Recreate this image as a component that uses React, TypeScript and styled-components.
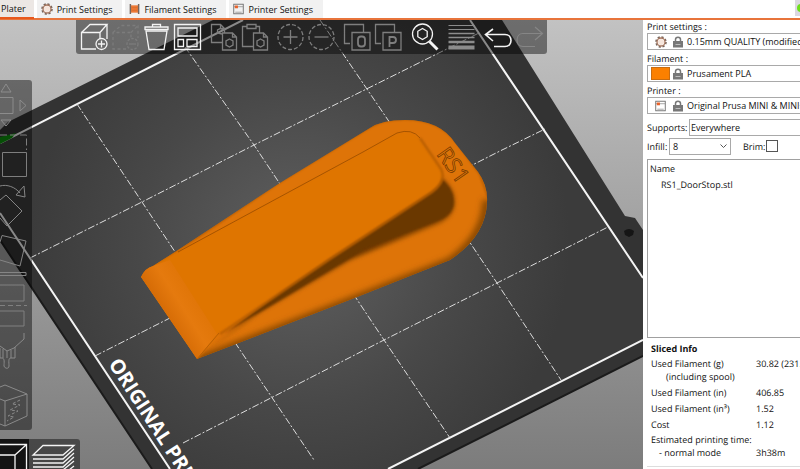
import React from "react";
import styled, { createGlobalStyle, css } from "styled-components";

const GlobalStyle = createGlobalStyle`
  html, body, #root { height: 100%; margin: 0; }
  body { overflow: hidden; background: #fff; text-rendering: geometricPrecision; }
  *, *::before, *::after { box-sizing: border-box; }
  body, button, select, input, table {
    font-family: "Open Sans", "Noto Sans", sans-serif;
    font-size: 9px;
    color: #111;
  }
`;

const Window = styled.div`
  display: flex;
  flex-direction: column;
  height: 100vh;
  overflow: hidden;
`;

const TabBar = styled.nav`
  display: flex;
  gap: 3px;
  height: 20px;
  flex: none;
  background: #fff;
  border-bottom: 2px solid #e8743b;
`;

const Tab = styled.button<{ $active?: boolean }>`
  display: flex;
  align-items: center;
  gap: 4px;
  height: ${(p) => (p.$active ? 19 : 18)}px;
  padding: 0 10px 0 4px;
  border: 0;
  background: ${(p) => (p.$active ? "#ece7e4" : "#f1f1f1")};
  white-space: nowrap;
  ${(p) =>
    p.$active &&
    css`
      padding: 0 8px 0 1px;
      border-bottom: 2px solid #e8581c;
    `}
`;

const ModeButton = styled.button`
  width: 5px;
  height: 16px;
  margin-left: auto;
  padding: 0;
  border: 0;
  overflow: hidden;
  background: #dcd8e2;
  svg { display: block; }
`;

const Workspace = styled.main`
  display: flex;
  flex: 1;
  min-height: 0;
`;

const Viewport = styled.section`
  position: relative;
  flex: 1;
  min-width: 0;
  overflow: hidden;
`;

const SceneSvg = styled.svg`
  display: block;
  width: 100%;
  height: 100%;
`;

const Overlay = styled.div`
  position: absolute;
  display: flex;
  background: rgba(0, 0, 0, 0.44);
`;

const TopTools = styled(Overlay)`
  top: 0;
  left: 76px;
  gap: 5px;
  padding: 2px 2px 2px 3px;
  border-radius: 0 0 3px 3px;
`;

const SideTools = styled(Overlay)`
  top: 60px;
  left: 0;
  flex-direction: column;
  border-radius: 0 3px 3px 0;
`;

const ViewTools = styled(Overlay)`
  bottom: 0;
  left: 0;
  border-radius: 0 3px 0 0;
`;

const ToolGroup = styled.div`
  display: flex;
`;

const ToolButton = styled.button<{ $w: number; $h: number; $tone: string; $pressed?: boolean }>`
  width: ${(p) => p.$w}px;
  height: ${(p) => p.$h}px;
  padding: 0;
  border: 0;
  background: ${(p) => (p.$pressed ? "rgba(0,0,0,0.72)" : "transparent")};
  color: ${(p) => p.$tone};
  svg {
    display: block;
    fill: none;
    stroke: currentColor;
  }
`;

const Sidebar = styled.aside`
  display: flex;
  flex-direction: column;
  width: 157px;
  flex: none;
  padding: 0 0 2px 4px;
  overflow: hidden;
  background: #fff;
  white-space: nowrap;
`;

const Field = styled.div`
  display: flex;
  flex-direction: column;
  height: 32px;
`;

const FieldLabel = styled.label`
  height: 13px;
  line-height: 13px;
`;

const Combo = styled.div`
  display: flex;
  align-items: center;
  gap: 3px;
  height: 17px;
  padding-left: 3px;
  border: 1px solid #a9a9a9;
  border-right: 0;
`;

const PresetSelect = styled.select`
  flex: 1;
  min-width: 0;
  height: 15px;
  padding: 0;
  border: 0;
  appearance: none;
  background: transparent;
  text-overflow: clip;
`;

const Options = styled.div`
  display: grid;
  gap: 1px;
  padding: 2px 0 1px;
`;

const Row = styled.div`
  display: flex;
  align-items: center;
  height: 18px;
`;

const BoxSelect = styled.select<{ $w?: number }>`
  ${(p) => (p.$w ? `width: ${p.$w}px; flex: none;` : "flex: 1; min-width: 0;")}
  height: 17px;
  padding: 0 ${(p) => (p.$w ? 3 : 1)}px;
  border: 1px solid #a9a9a9;
  ${(p) => !p.$w && "border-right: 0;"}
  border-radius: 0;
  appearance: none;
  background: transparent;
`;

const InlineLabel = styled.label<{ $w: number }>`
  width: ${(p) => p.$w}px;
  flex: none;
`;

const InfillBox = styled.div`
  display: grid;
  align-items: center;
  margin-right: 12px;
  > * { grid-area: 1 / 1; }
  > svg { justify-self: end; margin-right: 4px; pointer-events: none; }
`;

const Check = styled.input`
  appearance: none;
  width: 12px;
  height: 12px;
  margin: 0;
  border: 1px solid #555;
  background: #fff;
`;

const ObjectList = styled.div`
  flex: 1;
  min-height: 40px;
  margin-top: 3px;
  border: 1px solid #a0a0a0;
  border-right: 0;
`;

const ObjectTable = styled.table`
  border-collapse: collapse;
  th, td {
    height: 16px;
    padding: 0 2px;
    font-weight: 400;
    text-align: left;
  }
  td { padding-left: 13px; }
`;

const SlicedInfo = styled.section`
  margin-top: 4px;
  padding: 0 0 6px 4px;
  border-bottom: 1px solid #ddd;
`;

const SlicedTitle = styled.h2`
  margin: 0;
  font-size: 9px;
  line-height: 14px;
`;

const SlicedTable = styled.table`
  border-collapse: collapse;
  table-layout: fixed;
  width: 100%;
  th, td {
    padding: 1px 0;
    height: 16px;
    line-height: 13px;
    font-weight: 400;
    text-align: left;
    vertical-align: middle;
  }
  th { width: 105px; }
`;

const Sub = styled.span<{ $indent: number }>`
  display: block;
  padding-left: ${(p) => p.$indent}px;
`;

const GearIcon = () => (
  <svg width="12" height="12" viewBox="0 0 12 12" fill="none" aria-hidden="true">
    <circle cx="6" cy="6" r="5" stroke="#75665e" strokeWidth="1.6" strokeDasharray="2.2 1.7" />
    <circle cx="6" cy="6" r="4" stroke="#a5745c" strokeWidth="1.3" />
    <circle cx="6" cy="6" r="3" fill="#f7e6dc" />
  </svg>
);

const SpoolIcon = () => (
  <svg width="11" height="12" viewBox="0 0 12 12" aria-hidden="true">
    <rect x="2" y="2" width="8" height="8" fill="#ee7a36" />
    <path d="M1.5 .5v11M10.5 .5v11" stroke="#75665e" strokeWidth="1.6" />
    <path d="M3 4.5h6M3 7.5h6" stroke="#cf6528" strokeWidth=".6" />
  </svg>
);

const PrinterIcon = () => (
  <svg width="11" height="12" viewBox="0 0 12 12" fill="none" aria-hidden="true">
    <rect x=".8" y=".8" width="10.4" height="10.4" stroke="#6f6f6f" />
    <path d="M1 3.5h10M2.5 9.5h7" stroke="#8b8b8b" strokeWidth=".8" />
    <rect x="2" y="2.2" width="3.4" height="3" fill="#e8622a" />
  </svg>
);

const LockIcon = () => (
  <svg width="11" height="12" viewBox="0 0 11 12" fill="none" aria-hidden="true">
    <path d="M2.5 6V3.4C2.5.4 7.5.4 7.5 3.4V6" stroke="#777" strokeWidth="1.5" />
    <rect x="0" y="5" width="10" height="6.500" fill="#777" />
    <path d="M2.500 8.500h5" stroke="#bbb" strokeWidth="1" />
  </svg>
);

type Tool = { name: string; tone: string; art: React.ReactNode; w?: number };
const ON = "#f4f4f4";
const OFF = "#7e7e7e";
const FAINT = "#7c7c7c";

const toolGroups: Tool[][] = [
  [
    {
      name: "Add", tone: ON,
      art: <><path d="M17 27H2.500V10.500H21V17M2.500 10.500 11 2.500h17L21 10.500M28 2.500V17" /><circle cx="22.500" cy="22" r="5.500" /><path d="M22.500 18.500v7M19 22h7" /></>,
    },
    {
      name: "Delete", tone: FAINT,
      art: <><path d="M16 27H3V10.500h18V16M3 10.500l8-7h17V16M21 10.500l7-7" strokeDasharray="3 2.500" /><circle cx="22.500" cy="22" r="5.500" strokeDasharray="2.500 1.500" /><path d="M19 22h7" /></>,
    },
    {
      name: "Delete all", tone: ON,
      art: <><path d="M5 9 8 27.500h15L26 9Z" /><path d="M4 5h23v2.500H4zM11.500 5V2.500h8V5" /></>,
    },
    {
      name: "Arrange", tone: ON,
      art: <><path d="M2.500 2.500h26v25h-26z" /><path d="M6 6h19v8H6zM6 17.500h5.500v7H6zM15 17.500h10v7H15z" /></>,
    },
  ],
  [
    {
      name: "Copy", tone: OFF,
      art: <><path d="M14 20.500H3.500v-18h9l4 4V11M12.500 2.500v4h4" /><path d="M14.500 11h10l4 4v13h-14zM24.500 11v4h4" /><path d="m21.500 17 3.500 2v4l-3.500 2-3.500-2v-4zM14 12l-4.500-1V8l3-1.500 3 1.500" /></>,
    },
    {
      name: "Paste", tone: OFF,
      art: <><path d="M14 24.500H3.500V4.500H8M17 4.500h3.500V11M8 2.500h9v4H8z" /><path d="M14.500 11h10l4 4v13h-14zM24.500 11v4h4" /><path d="m21.500 17 3.500 2v4l-3.500 2-3.500-2v-4z" /></>,
    },
  ],
  [
    { name: "Add instance", tone: OFF, art: <><circle cx="15.500" cy="15" r="12.500" strokeDasharray="4 2" /><path d="M15.500 8v14M8.500 15h14" /></> },
    { name: "Remove instance", tone: OFF, art: <><circle cx="15.500" cy="15" r="12.500" strokeDasharray="4 2" /><path d="M8.500 15h14" /></> },
  ],
  [
    { name: "Split to objects", tone: OFF, art: <><path d="M8 21.500H2.500v-19h19V10M10 10.500h18V28H10z" /><rect x="16" y="14.500" width="7" height="10" rx="3" strokeWidth="1.800" /></> },
    { name: "Split to parts", tone: OFF, art: <><path d="M8 21.500H2.500v-19h19V10M10 10.500h18V28H10z" /><path d="M16.500 25V15h3.500c4 0 4 6 0 6h-3.500" strokeWidth="1.800" /></> },
  ],
  [
    { name: "Search", tone: ON, w: 32, art: <><circle cx="13.500" cy="12" r="10" /><path d="m13.500 6.500 4.700 2.800v5.400l-4.700 2.800-4.700-2.800V9.300z" /><path d="m20.500 19.500 8 8" strokeWidth="3" /></> },
  ],
  [
    { name: "Variable layer height", tone: "#8c8c8c", w: 32, art: <><path d="M2.500 3.500h26M2.500 7.500h26" strokeWidth="1" /><path d="M2.500 11.500h26M2.500 15.500h26" strokeWidth="1.500" /><path d="M2.500 20h26" strokeWidth="2.500" /><path d="M2.500 25.500h26" strokeWidth="4" /></> },
  ],
  [
    { name: "Undo", tone: ON, art: <path d="M10 7 2.500 12.500 10 19M2.500 12.500H22c8 0 8 12 0 12H11" strokeWidth="1.600" /> },
    { name: "Redo", tone: "#868686", art: <path d="m21 5 7.500 6.500L21 18M28 11.500H9c-8 0-8 13 0 13h12" strokeWidth="1.200" /> },
  ],
];

const gizmos: Tool[] = [
  { name: "Move", tone: "#8c8c8c", art: <path d="M0 17.500h13v16H0M1 12l5-8 5 8zM20 20l6 5.500-6 5.500zM1 40h10l-5 6z" /> },
  { name: "Scale", tone: OFF, art: <><path d="M0 5h26.500v15" strokeDasharray="7 3" /><path d="M2.500 22.500h24v24h-24z" /></> },
  { name: "Rotate", tone: "#858585", art: <><path d="M0 6c7-2 15 1 20 7M16 15l8-9 1 11zM0 20l6-5 16 16L7 46l-7-8" /></> },
  { name: "Place on face", tone: "#858585", art: <><path d="M2 5.500 26 11l-6 25-20-6M2 5.500 0 12" /><path d="M0 42.500h26v3H0" /></> },
  { name: "Cut", tone: "#808080", art: <><path d="M0 5h24v16H0M0 31h24v15H0" /><path d="M0 25.500h27" strokeDasharray="5 3" /></> },
  { name: "Paint-on supports", tone: "#8a8a8a", art: <path d="M24 3v6L14 18 7 21l-7-5M0 18v10h2c3 0 2 5 2 8 1 3 5 3 5 0 0-4-1-8 2-8h4V17M3 19v9M7 21v7M11 20v8" /> },
  { name: "Seam painting", tone: "#8a8a8a", art: <><path d="M0 7l5-2 22 9v22L5 46l-5-2M0 19l5 2 22-7M5 21v25" /><path d="M20 20l-8 4 8 1-10 5 8 1-10 5 6 1-7 4" strokeDasharray="3 2" /></> },
];

const Scene = () => (
  <SceneSvg viewBox="0 20 643 449" preserveAspectRatio="xMinYMin slice" role="img" aria-label="Door stop on the print bed">
    <defs>
      <linearGradient id="sky" x1="0" y1="0" x2="0" y2="1">
        <stop offset="0" stopColor="#c2c2c2" />
        <stop offset="1" stopColor="#7c7c7c" />
      </linearGradient>
      <radialGradient id="bed" gradientUnits="userSpaceOnUse" cx="300" cy="245" r="270">
        <stop offset="0" stopColor="#606060" />
        <stop offset=".6" stopColor="#484848" />
        <stop offset="1" stopColor="#3b3b3b" />
      </radialGradient>
      <linearGradient id="front" gradientUnits="userSpaceOnUse" x1="158" y1="307" x2="193" y2="285">
        <stop offset="0" stopColor="#d46a05" />
        <stop offset=".5" stopColor="#e57a0e" />
        <stop offset="1" stopColor="#df7406" />
      </linearGradient>
      <linearGradient id="side" gradientUnits="userSpaceOnUse" x1="350" y1="232" x2="366" y2="262">
        <stop offset="0" stopColor="#7a3f00" />
        <stop offset=".6" stopColor="#6b3700" />
        <stop offset="1" stopColor="#9a5000" />
      </linearGradient>
      <filter id="soft1"><feGaussianBlur stdDeviation="1" /></filter>
      <filter id="soft2"><feGaussianBlur stdDeviation="2" /></filter>
      <filter id="soft3"><feGaussianBlur stdDeviation="3" /></filter>
      <clipPath id="body">
        <path d="M141 277Q145 268 153 266L175 252 280 183 370 128Q382 120 405 120 440 120 455 143L478 172Q488 186 487 202 486 236 450 260L357 297 197 359Z" />
      </clipPath>
    </defs>

    <path fill="url(#sky)" d="M0 20h643v449H0z" />
    <path fill="#333" d="M0 130 8 122 213 20H502L625 216 635 218 643 230V356L418 469H152L0 240Z" />
    <path stroke="#1b1b1b" strokeWidth="2" fill="none" d="M643 356 418 469M0 240 152 469" />
    <path fill="url(#bed)" d="M0 143 243 20H470L643 278V340L388 469H170L0 213Z" />
    <path stroke="#f4f4f4" strokeWidth="2" fill="none" d="M0 143 243 20M470 20 643 278M643 340 388 469M170 469 0 213" />
    <g stroke="#ddd" strokeWidth="1" strokeDasharray="7 2 2 2" fill="none">
      <path d="M77 104 142 202 240 350 314 460M185 47 254 145 384 340 450 438M320 20 388 120 497 283 561 380" />
      <path d="M30 258 142 202 254 145 479 33M95 356 168 319 500 151 545 129M183 443 384 340 497 283 608 227" />
    </g>
    <path d="M0 137 16 133 12 138 0 144Z" fill="#0c8c0c" />
    <path d="M624 231q5-4 10 0l-1 4-4 2-4-2z" fill="#151515" />
    <text x="108" y="364" transform="rotate(57 108 364)" fontFamily="Open Sans" fontWeight="700" fontSize="20" fill="#fff">ORIGINAL PRUSA</text>

    <g clipPath="url(#body)">
      <path d="M130 110h370v260H130z" fill="#de7408" />
      <path d="M487 200Q486 236 450 262L357 299 197 361" fill="none" stroke="#864600" strokeWidth="9" filter="url(#soft3)" />
      <path d="M141 275 280 182 370 127Q382 119 405 119 440 119 457 143L480 174 489 200" fill="none" stroke="#b45c02" strokeWidth="2" filter="url(#soft1)" />
      <path d="M205 352 300 277 442 178Q457 190 454 208 450 220 436 225L350 260 260 312Z" fill="url(#side)" filter="url(#soft2)" />
      <path d="M225 333 330 255 440 178Q456 190 453 207 450 217 436 222L363 250 280 300Z" fill="#6b3700" filter="url(#soft1)" />
      <path d="M175 253 363 152 395 134Q413 127 422 142L441 169Q447 181 432 192L330 259 217 336 197 359 141 277 153 266Z" fill="#df7406" filter="url(#soft1)" />
      <path d="M178 252 363 152 397 133Q412 128 420 138" fill="none" stroke="#a65401" strokeWidth="1" />
      <path d="M420 138 441 169Q447 181 432 192L330 259 220 334" fill="none" stroke="#b05a02" strokeWidth="2" filter="url(#soft1)" />
      <path d="M141 277Q145 268 153 266L170 260 217 334 197 359Z" fill="url(#front)" />
      <path d="M197 359 219 333" stroke="#b86006" strokeWidth="1" />
    </g>
    <text x="436" y="154" transform="rotate(55 436 154)" fontFamily="Open Sans" fontSize="22" fill="none" stroke="#6f3600" strokeWidth=".7">RS1</text>
  </SceneSvg>
);

const Preset = ({ id, label, value, icon }: { id: string; label: string; value: string; icon: React.ReactNode }) => (
  <Field>
    <FieldLabel htmlFor={id}>{label}</FieldLabel>
    <Combo>
      {icon}
      <LockIcon />
      <PresetSelect id={id}><option>{value}</option></PresetSelect>
    </Combo>
  </Field>
);

const Swatch = () => (
  <svg width="19" height="13" aria-hidden="true"><rect x=".5" y=".5" width="18" height="12" fill="#fb8000" stroke="#c96d10" /></svg>
);

const IconSlot = styled.span`
  display: flex;
  justify-content: center;
  width: 19px;
`;

const sliced = [
  { label: <>Used Filament (g)<Sub $indent={15}>(including spool)</Sub></>, value: <>30.82 (231.<Sub $indent={0}>&nbsp;</Sub></> },
  { label: "Used Filament (in)", value: "406.85" },
  { label: "Used Filament (in³)", value: "1.52" },
  { label: "Cost", value: "1.12" },
  { label: <>Estimated printing time:<Sub $indent={8}>- normal mode</Sub></>, value: <><Sub $indent={0}>&nbsp;</Sub>3h38m</> },
];

export default function App() {
  return (
    <Window>
      <GlobalStyle />
      <TabBar>
        <Tab $active>Plater</Tab>
        <Tab><GearIcon />Print Settings</Tab>
        <Tab><SpoolIcon />Filament Settings</Tab>
        <Tab><PrinterIcon />Printer Settings</Tab>
        <ModeButton aria-label="Simple mode">
          <svg width="10" height="16" aria-hidden="true"><circle cx="6" cy="8" r="4" fill="#6fe01c" /></svg>
        </ModeButton>
      </TabBar>
      <Workspace>
        <Viewport>
          <Scene />
          <TopTools>
            {toolGroups.map((group, i) => (
              <ToolGroup key={i}>
                {group.map((t) => (
                  <ToolButton key={t.name} aria-label={t.name} $w={t.w ?? 31} $h={30} $tone={t.tone}>
                    <svg width="31" height="30" strokeWidth="1.300">{t.art}</svg>
                  </ToolButton>
                ))}
              </ToolGroup>
            ))}
          </TopTools>
          <SideTools>
            {gizmos.map((t) => (
              <ToolButton key={t.name} aria-label={t.name} $w={32} $h={50} $tone={t.tone}>
                <svg width="32" height="50">{t.art}</svg>
              </ToolButton>
            ))}
          </SideTools>
          <ViewTools>
            <ToolButton aria-label="3D editor view" $w={29} $h={30} $tone={ON} $pressed>
              <svg width="29" height="30" strokeWidth="1.300"><path d="M0 5.500h26.500V30M0 16h15v14M15 16 26 6" /></svg>
            </ToolButton>
            <ToolButton aria-label="Preview" $w={51} $h={30} $tone={ON}>
              <svg width="51" height="30" strokeWidth="1.300">
                <path d="M14 6.500h31L34 16H4zM4 20h30l11-10M4 24h30l11-10M4 28h30l11-10M34 31l11-9M40 31l5-4" />
              </svg>
            </ToolButton>
          </ViewTools>
        </Viewport>
        <Sidebar>
          <Preset id="print" label="Print settings :" value="0.15mm QUALITY (modified)" icon={<IconSlot><GearIcon /></IconSlot>} />
          <Preset id="filament" label="Filament :" value="Prusament PLA" icon={<Swatch />} />
          <Preset id="printer" label="Printer :" value="Original Prusa MINI & MINI+" icon={<IconSlot><PrinterIcon /></IconSlot>} />
          <Options>
            <Row>
              <InlineLabel htmlFor="supports" $w={42}>Supports:</InlineLabel>
              <BoxSelect id="supports"><option>Everywhere</option></BoxSelect>
            </Row>
            <Row>
              <InlineLabel htmlFor="infill" $w={22}>Infill:</InlineLabel>
              <InfillBox>
                <BoxSelect id="infill" $w={62}><option>8</option></BoxSelect>
                <svg width="7" height="5" fill="none" stroke="#555" aria-hidden="true"><path d="m.5.500 3 3 3-3" /></svg>
              </InfillBox>
              <InlineLabel htmlFor="brim" $w={23}>Brim:</InlineLabel>
              <Check id="brim" type="checkbox" />
            </Row>
          </Options>
          <ObjectList>
            <ObjectTable>
              <thead><tr><th>Name</th></tr></thead>
              <tbody><tr><td>RS1_DoorStop.stl</td></tr></tbody>
            </ObjectTable>
          </ObjectList>
          <SlicedInfo>
            <SlicedTitle>Sliced Info</SlicedTitle>
            <SlicedTable>
              <tbody>
                {sliced.map((r, i) => (
                  <tr key={i}><th scope="row">{r.label}</th><td>{r.value}</td></tr>
                ))}
              </tbody>
            </SlicedTable>
          </SlicedInfo>
        </Sidebar>
      </Workspace>
    </Window>
  );
}
